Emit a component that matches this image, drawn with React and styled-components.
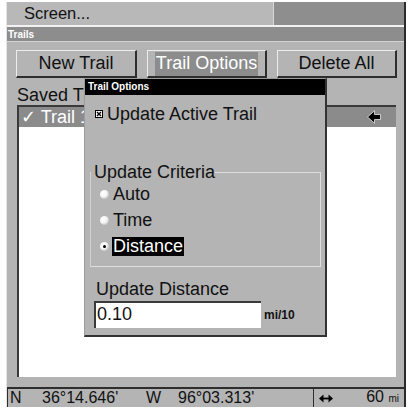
import styled, { createGlobalStyle } from "styled-components";

const GlobalStyle = createGlobalStyle`
  html, body {
    margin: 0;
    padding: 0;
    background: #ffffff;
  }
  body {
    font-family: "Liberation Sans", Arial, sans-serif;
  }
  * {
    box-sizing: border-box;
  }
`;

const Page = styled.div`
  padding: 2px 0 0 6px;
`;

const Frame = styled.div`
  position: relative;
  width: 400px;
  height: 405px;
  background: #b4b4b4;
  border-left: 1px solid #e4e4e4;
  border-right: 2px solid #2b2b2b;
  display: flex;
  flex-direction: column;
`;

const ScreenRow = styled.div`
  height: 25px;
  display: flex;
  border-bottom: 2px solid #f2f2f2;
  flex-shrink: 0;
`;

const ScreenLabel = styled.div`
  flex: 1;
  font-size: 16.5px;
  line-height: 23px;
  padding-left: 17px;
  color: #111;
  background: #b8b8b8;
`;

const ScreenBlock = styled.div`
  width: 131px;
  background: #8e8e8e;
  border-left: 1px solid #d8d8d8;
`;

const TitleBar = styled.div`
  height: ${(p) => p.$h || 15}px;
  flex-shrink: 0;
  background: ${(p) => p.$bg || "#8d8d8d"};
  color: #ffffff;
  font-weight: bold;
  font-size: 10px;
  line-height: ${(p) => p.$h || 15}px;
  padding-left: ${(p) => p.$pad || 1}px;
  border-bottom: ${(p) => (p.$line ? "1px solid #d4d4d4" : "none")};
`;

const Content = styled.div`
  flex: 1;
  display: flex;
  flex-direction: column;
  padding: 8px 8px 10px 9px;
  min-height: 0;
`;

const ButtonRow = styled.div`
  display: grid;
  grid-template-columns: 121px 120px 120px;
  column-gap: 10px;
  height: 28px;
`;

const Button = styled.div`
  display: flex;
  align-items: center;
  justify-content: center;
  border-top: 1px solid #ededed;
  border-left: 1px solid #ededed;
  border-right: 2px solid #2e2e2e;
  border-bottom: 2px solid #2e2e2e;
  font-size: 18px;
  color: #111;
`;

const ButtonText = styled.span`
  padding: 1px 1px 2px;
  background: ${(p) => (p.$active ? "#8c8c8c" : "transparent")};
  color: ${(p) => (p.$active ? "#ffffff" : "#111")};
`;

const Label = styled.div`
  font-size: 18px;
  line-height: 20px;
  color: #111;
  margin-top: ${(p) => p.$mt || 0}px;
  margin-left: ${(p) => p.$ml || 0}px;
  white-space: nowrap;
`;

const List = styled.div`
  flex: 1;
  margin-left: 1px;
  background: #ffffff;
  border-top: 2px solid #3a3a3a;
  border-left: 2px solid #3a3a3a;
`;

const ListRow = styled.div`
  height: 20px;
  display: flex;
  align-items: center;
  justify-content: space-between;
  background: ${(p) => (p.$selected ? "#8b8b8b" : "transparent")};
  color: #ffffff;
  font-size: 18px;
  padding: 0 15px 0 2px;
`;

const StatusBar = styled.div`
  height: 20px;
  flex-shrink: 0;
  display: flex;
  align-items: center;
  border-top: 2px solid #2e2e2e;
  font-size: 16px;
  color: #111;
`;

const StatusCell = styled.div`
  width: ${(p) => p.$w}px;
  padding-left: ${(p) => p.$pl || 0}px;
  border-left: ${(p) => p.$border || "none"};
  height: 100%;
  line-height: 18px;
  white-space: nowrap;
  display: flex;
  align-items: center;
  justify-content: ${(p) => (p.$spread ? "space-between" : "flex-start")};
`;

const Scale = styled.span`
  padding-right: 5px;
`;

const Small = styled.span`
  font-size: 10px;
`;

const Dialog = styled.div`
  position: absolute;
  left: 77px;
  top: 76px;
  width: 243px;
  height: 259px;
  background: #b4b4b4;
  border-top: 1px solid #9c9c9c;
  border-left: 1px solid #9c9c9c;
  border-right: 2px solid #333;
  border-bottom: 2px solid #333;
  display: flex;
  flex-direction: column;
`;

const DialogBody = styled.div`
  padding: 0 4px 0 5px;
  display: flex;
  flex-direction: column;
`;

const CheckRow = styled.div`
  display: flex;
  align-items: center;
  gap: 4px;
  margin: 9px 0 0 5px;
  font-size: 18px;
  line-height: 20px;
  color: #111;
`;

const Group = styled.fieldset`
  margin: 39px 0 0 0;
  padding: 0 0 7px 0;
  border: 1px solid #dedede;
  border-left-color: #d0d0d0;
`;

const Legend = styled.legend`
  padding: 0 0 0 3px;
  margin-left: 0;
  font-size: 18px;
  line-height: 18px;
  color: #111;
`;

const RadioRow = styled.div`
  height: 26px;
  display: flex;
  align-items: center;
  gap: 3px;
  padding-left: 9px;
  font-size: 18px;
`;

const Radio = styled.span`
  width: 9px;
  height: 9px;
  border-radius: 50%;
  background: radial-gradient(circle at 35% 35%, #ffffff 0%, #f4f4f4 45%, #9a9a9a 100%);
  display: flex;
  align-items: center;
  justify-content: center;
  &::after {
    content: "";
    width: 3px;
    height: 3px;
    border-radius: 50%;
    background: ${(p) => (p.$on ? "#000" : "transparent")};
  }
`;

const RadioText = styled.span`
  padding: 0 1px;
  line-height: 19px;
  background: ${(p) => (p.$on ? "#000" : "transparent")};
  color: ${(p) => (p.$on ? "#fff" : "#111")};
`;

const InputRow = styled.div`
  display: flex;
  align-items: center;
  gap: 3px;
  margin: 2px 0 0 4px;
`;

const Input = styled.div`
  width: 167px;
  height: 27px;
  background: #ffffff;
  border-top: 2px solid #3a3a3a;
  border-left: 2px solid #3a3a3a;
  font-size: 18px;
  line-height: 23px;
  padding-left: 1px;
  color: #111;
`;

const Unit = styled.span`
  font-size: 12px;
  font-weight: bold;
  color: #111;
`;

const CheckBox = () => (
  <svg width="8" height="8" viewBox="0 0 8 8">
    <rect x="0.5" y="0.5" width="7" height="7" fill="#fff" stroke="#000" />
    <path d="M2 2 L6 6 M6 2 L2 6" stroke="#000" strokeWidth="1.4" />
  </svg>
);

const Arrow = () => (
  <svg width="14" height="14" viewBox="0 0 14 14">
    <path d="M0.5 7 L7.5 0.8 L7.5 4.5 L13.5 4.5 L13.5 9.5 L7.5 9.5 L7.5 13.2 Z" fill="#000" stroke="#fff" strokeWidth="0.7" />
  </svg>
);

const BothWays = () => (
  <svg width="14" height="9" viewBox="0 0 14 9">
    <path d="M3 4.5 L11 4.5" stroke="#000" strokeWidth="1.8" />
    <path d="M0 4.5 L4.5 0.5 L4.5 8.5 Z M14 4.5 L9.5 0.5 L9.5 8.5 Z" fill="#000" />
  </svg>
);

export default function App() {
  return (
    <Page>
      <GlobalStyle />
      <Frame>
        <ScreenRow>
          <ScreenLabel>Screen...</ScreenLabel>
          <ScreenBlock />
        </ScreenRow>
        <TitleBar $line>Trails</TitleBar>
        <Content>
          <ButtonRow>
            <Button><ButtonText>New Trail</ButtonText></Button>
            <Button><ButtonText $active>Trail Options</ButtonText></Button>
            <Button><ButtonText>Delete All</ButtonText></Button>
          </ButtonRow>
          <Label $mt={7} $ml={1}>Saved Trails</Label>
          <List>
            <ListRow $selected>
              <span>✓ Trail 1</span>
              <Arrow />
            </ListRow>
          </List>
        </Content>
        <StatusBar>
          <StatusCell $w={35} $pl={2} $border="1px solid #2e2e2e">N</StatusCell>
          <StatusCell $w={104}>36°14.646'</StatusCell>
          <StatusCell $w={32}>W</StatusCell>
          <StatusCell $w={135}>96°03.313'</StatusCell>
          <StatusCell $w={91} $pl={5} $spread $border="1px solid #2e2e2e">
            <BothWays />
            <Scale>60 <Small>mi</Small></Scale>
          </StatusCell>
        </StatusBar>
        <Dialog>
          <TitleBar $bg="#000" $h={16} $pad={3}>Trail Options</TitleBar>
          <DialogBody>
            <CheckRow>
              <CheckBox />
              <span>Update Active Trail</span>
            </CheckRow>
            <Group>
              <Legend>Update Criteria</Legend>
              <RadioRow><Radio /><RadioText>Auto</RadioText></RadioRow>
              <RadioRow><Radio /><RadioText>Time</RadioText></RadioRow>
              <RadioRow><Radio $on /><RadioText $on>Distance</RadioText></RadioRow>
            </Group>
            <Label $mt={12} $ml={6}>Update Distance</Label>
            <InputRow>
              <Input>0.10</Input>
              <Unit>mi/10</Unit>
            </InputRow>
          </DialogBody>
        </Dialog>
      </Frame>
    </Page>
  );
}
